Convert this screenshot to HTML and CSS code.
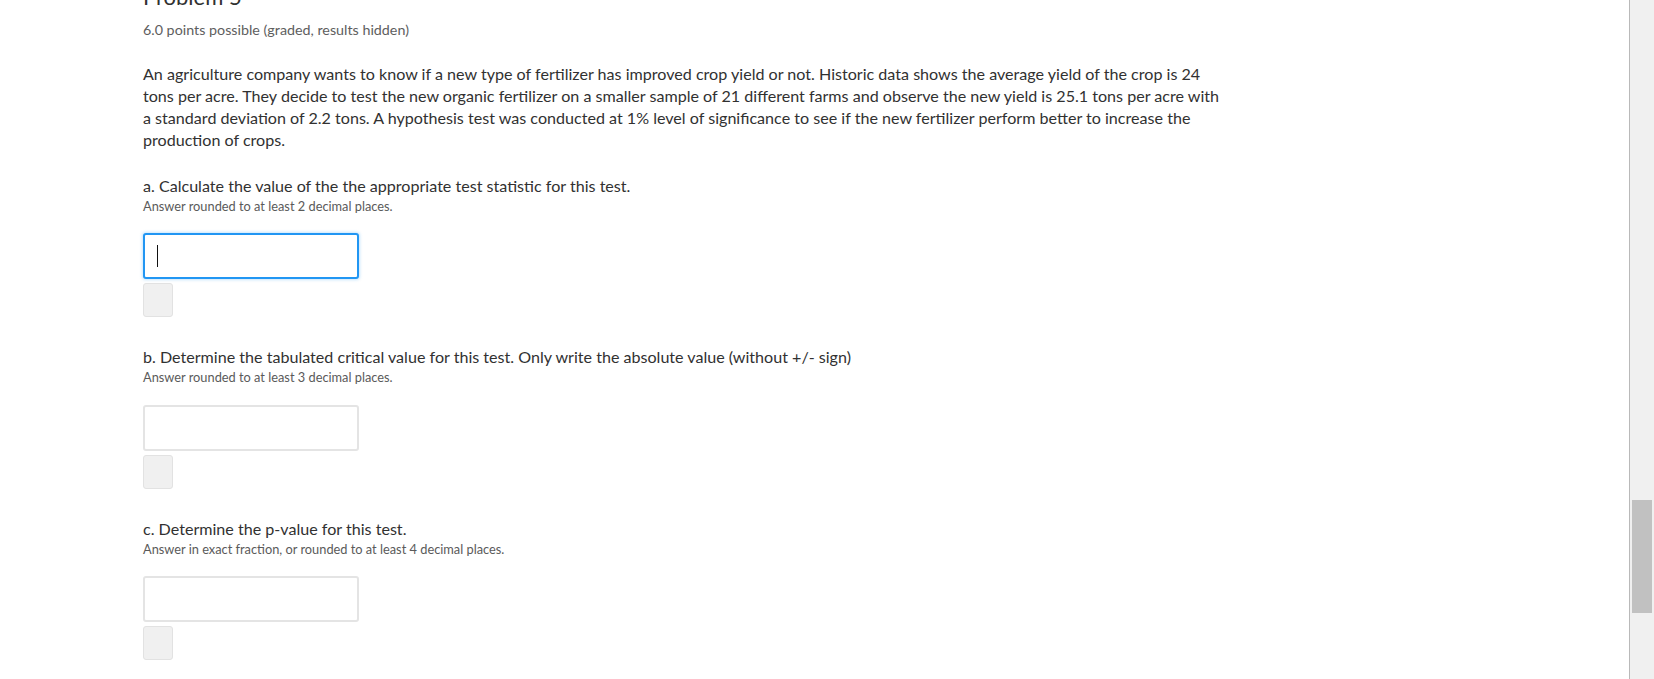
FILE: index.html
```html
<!DOCTYPE html>
<html lang="en">
<head>
<meta charset="utf-8">
<title>Problem 5</title>
<link rel="stylesheet" href="styles.css">
</head>
<body>
<div class="window">
  <main class="page">
    <div class="problem">
      <h3 class="problem-title">Problem 5</h3>
      <div class="problem-progress">6.0 points possible (graded, results hidden)</div>
      <p class="problem-text">An agriculture company wants to know if a new type of fertilizer has improved crop yield or not. Historic data shows the average yield of the crop is 24 tons per acre. They decide to test the new organic fertilizer on a smaller sample of 21 different farms and observe the new yield is 25.1 tons per acre with a standard deviation of 2.2 tons. A hypothesis test was conducted at 1% level of significance to see if the new fertilizer perform better to increase the production of crops.</p>

      <section class="question">
        <label class="question-label">a. Calculate the value of the the appropriate test statistic for this test.</label>
        <div class="question-hint">Answer rounded to at least 2 decimal places.</div>
        <div class="field field-focused">
          <input class="answer-input" type="text" aria-label="answer a">
          <span class="caret"></span>
        </div>
        <button class="submit-btn" type="button" aria-label="submit a"></button>
      </section>

      <section class="question">
        <label class="question-label">b. Determine the tabulated critical value for this test. Only write the absolute value (without +/- sign)</label>
        <div class="question-hint">Answer rounded to at least 3 decimal places.</div>
        <div class="field">
          <input class="answer-input" type="text" aria-label="answer b">
        </div>
        <button class="submit-btn" type="button" aria-label="submit b"></button>
      </section>

      <section class="question">
        <label class="question-label">c. Determine the p-value for this test.</label>
        <div class="question-hint">Answer in exact fraction, or rounded to at least 4 decimal places.</div>
        <div class="field">
          <input class="answer-input" type="text" aria-label="answer c">
        </div>
        <button class="submit-btn" type="button" aria-label="submit c"></button>
      </section>
    </div>
  </main>
  <div class="divider"></div>
  <div class="scrollbar"><div class="scroll-thumb"></div></div>
</div>
</body>
</html>
```
FILE: styles.css
```css
* { box-sizing: border-box; }

html, body {
  margin: 0;
  padding: 0;
  background: #ffffff;
}

body {
  font-family: "Lato", "Open Sans", sans-serif;
  color: #313131;
}

.window {
  display: flex;
  height: 679px;
  overflow: hidden;
}

.page {
  flex: 1;
  overflow: hidden;
  padding-left: 143px;
}

.problem {
  display: flex;
  flex-direction: column;
  align-items: flex-start;
}

.problem-title {
  margin: -16.5px 0 0;
  font-size: 22px;
  line-height: 26px;
  font-weight: 400;
  color: #313131;
}

.problem-progress {
  margin-top: 10px;
  font-size: 14.3px;
  line-height: 20px;
  color: #5e5e5e;
}

.problem-text {
  margin: 23px 0 0;
  width: 1082px;
  font-size: 16.1px;
  line-height: 22.3px;
  color: #313131;
}

.question {
  display: flex;
  flex-direction: column;
  align-items: flex-start;
  margin-top: 23px;
}

.question + .question {
  margin-top: 29px;
}

.question-label {
  font-size: 16.1px;
  line-height: 22px;
  color: #313131;
}

.question-hint {
  margin-top: 1px;
  font-size: 12.8px;
  line-height: 16px;
  color: #5a5a5a;
}

.field {
  position: relative;
  margin-top: 19.5px;
  width: 216px;
  height: 46px;
}

.answer-input {
  display: block;
  width: 100%;
  height: 100%;
  margin: 0;
  padding: 0 12px;
  border: 2px solid #e4e4e4;
  border-radius: 3px;
  background: #ffffff;
  font-family: inherit;
  font-size: 16px;
  outline: none;
}

.field-focused .answer-input {
  border-color: #2196f3;
  box-shadow: 0 0 3px 1px rgba(33, 150, 243, 0.25);
}

.caret {
  position: absolute;
  left: 14px;
  top: 12px;
  width: 1px;
  height: 22px;
  background: #111111;
}

.submit-btn {
  margin-top: 4px;
  width: 30px;
  height: 34px;
  padding: 0;
  border: 1px solid #e2e2e2;
  border-radius: 3px;
  background: #f0f0f0;
}

.divider {
  width: 1px;
  flex: none;
  background: #b9b9b9;
}

.scrollbar {
  flex: none;
  width: 24px;
  background: #f0f0f0;
  padding: 500px 2px 0 2px;
}

.scroll-thumb {
  width: 20px;
  height: 113px;
  background: #c1c1c1;
}
```
